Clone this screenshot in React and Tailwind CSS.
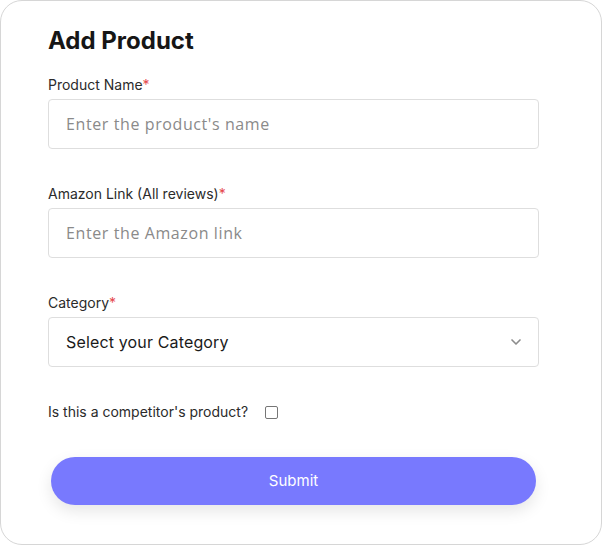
import React, { useState } from 'react';
import { ChevronDown } from 'lucide-react';

const Field = ({ label, children }) => (
  <div className="flex flex-col gap-[4px]">
    <label className="text-sm leading-5 text-[#2b2b2b]">
      {label}
      <span className="text-[#e5484d]">*</span>
    </label>
    {children}
  </div>
);

export default function App() {
  const [competitor, setCompetitor] = useState(false);

  return (
    <div className="w-[602px] h-[545px] bg-white font-['Inter',sans-serif]">
      <div className="h-full w-full rounded-[22px] border border-[#d6d6d6] pl-[47px] pr-[62px] pt-[24px]">
        <h1 className="text-2xl leading-8 font-bold text-[#161616]">Add Product</h1>

        <div className="mt-[18px] flex flex-col gap-[35px]">
          <Field label="Product Name">
            <input
              type="text"
              placeholder="Enter the product's name"
              className="h-[50px] w-full rounded-[4px] border border-[#dedede] px-[17px] text-base tracking-[0.6px] font-['Open_Sans',sans-serif] placeholder:text-[#8a8a8a] outline-none"
            />
          </Field>

          <Field label="Amazon Link (All reviews)">
            <input
              type="text"
              placeholder="Enter the Amazon link"
              className="h-[50px] w-full rounded-[4px] border border-[#dedede] px-[17px] text-base tracking-[0.6px] font-['Open_Sans',sans-serif] placeholder:text-[#8a8a8a] outline-none"
            />
          </Field>

          <Field label="Category">
            <div className="flex h-[50px] w-full items-center justify-between rounded-[4px] border border-[#dedede] pl-[17px] pr-[14px]">
              <span className="text-base tracking-[0.15px] text-[#1a1a1a]">Select your Category</span>
              <ChevronDown size={16} strokeWidth={2.5} className="text-[#8c8c8c]" />
            </div>
          </Field>

          <label className="flex items-center gap-[17px] text-sm leading-5 text-[#2b2b2b]">
            Is this a competitor's product?
            <input
              type="checkbox"
              checked={competitor}
              onChange={(e) => setCompetitor(e.target.checked)}
              className="h-[13px] w-[13px] appearance-none rounded-[2px] border border-[#767676] bg-white"
            />
          </label>
        </div>

        <button className="mt-[35px] ml-[3px] h-[48px] w-[485px] rounded-full bg-[#7879fe] text-[15px] text-white shadow-[0_6px_16px_rgba(0,0,0,0.10)]">
          Submit
        </button>
      </div>
    </div>
  );
}
